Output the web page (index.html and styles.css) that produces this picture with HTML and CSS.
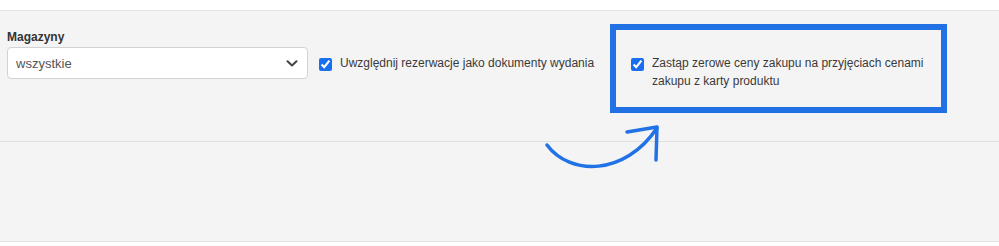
FILE: index.html
```html
<!DOCTYPE html>
<html lang="pl">
<head>
    <meta charset="UTF-8">
    <meta name="viewport" content="width=device-width, initial-scale=1.0">
    <title>Magazyny</title>
    <link rel="stylesheet" href="styles.css">
</head>
<body>
    <div class="topbar"></div>

    <!-- Filters -->
    <div class="panel">
        <div class="filter-row">
            <div class="field">
                <label class="field-label" for="warehouse">Magazyny</label>
                <select id="warehouse" class="field-select">
                    <option>wszystkie</option>
                </select>
            </div>

            <label class="check check-reservations">
                <input type="checkbox" checked>
                <span>Uwzględnij rezerwacje jako dokumenty wydania</span>
            </label>

            <div class="highlight">
                <label class="check">
                    <input type="checkbox" checked>
                    <span>Zastąp zerowe ceny zakupu na przyjęciach cenami zakupu z karty produktu</span>
                </label>
            </div>
        </div>
    </div>

    <div class="panel-empty"></div>

    <!-- Annotation arrow -->
    <svg class="arrow" width="999" height="246" viewBox="0 0 999 246">
        <path d="M547,145 C570,176 625,176 657,128" fill="none" stroke="#2172e6" stroke-width="3.5" stroke-linecap="round"/>
        <path d="M627,132 L657,127 L656,160" fill="none" stroke="#2172e6" stroke-width="3.5" stroke-linecap="round" stroke-linejoin="round"/>
    </svg>
</body>
</html>
```

FILE: styles.css
```css
body {
    font-family: "Liberation Sans", Arial, sans-serif;
    margin: 0;
    background-color: #fff;
    color: #333;
}
.topbar {
    height: 10px;
    border-bottom: 1px solid #e2e2e2;
}
.panel {
    height: 117px;
    padding: 13px 7px 0;
    background-color: #f4f4f4;
    border-bottom: 1px solid #dedede;
}
.panel-empty {
    height: 99px;
    background-color: #f4f4f4;
    border-bottom: 1px solid #e2e2e2;
}
.filter-row {
    display: flex;
    align-items: flex-start;
}
.field {
    width: 301px;
    margin-top: 6px;
}
.field-label {
    display: block;
    font-size: 12px;
    font-weight: bold;
    line-height: 14px;
    margin-bottom: 3px;
    color: #333;
}
.field-select {
    appearance: none;
    width: 100%;
    height: 32px;
    padding: 0 30px 0 8px;
    font-family: inherit;
    font-size: 13px;
    color: #555;
    background-color: #fff;
    background-image: url("data:image/svg+xml,%3Csvg xmlns='http://www.w3.org/2000/svg' width='12' height='7' viewBox='0 0 12 7'%3E%3Cpath d='M1.5 1.2 L6 5.5 L10.5 1.2' fill='none' stroke='%23444' stroke-width='2' stroke-linecap='round' stroke-linejoin='round'/%3E%3C/svg%3E");
    background-repeat: no-repeat;
    background-position: right 9px center;
    border: 1px solid #d2d2d2;
    border-radius: 4px;
}
.check {
    display: flex;
    align-items: flex-start;
    gap: 8px;
    font-size: 12px;
    line-height: 18px;
    color: #3a3a3a;
}
.check input {
    width: 13px;
    height: 13px;
    margin: 4px 0 0;
    flex-shrink: 0;
    accent-color: #1a6ff0;
}
.check-reservations {
    width: 280px;
    margin: 30px 11px 0;
}
.highlight {
    box-sizing: border-box;
    width: 337px;
    height: 89px;
    padding: 24px 12px 0 15px;
    border: 6px solid #2170e4;
}
.arrow {
    position: absolute;
    top: 0;
    left: 0;
    pointer-events: none;
}
```
